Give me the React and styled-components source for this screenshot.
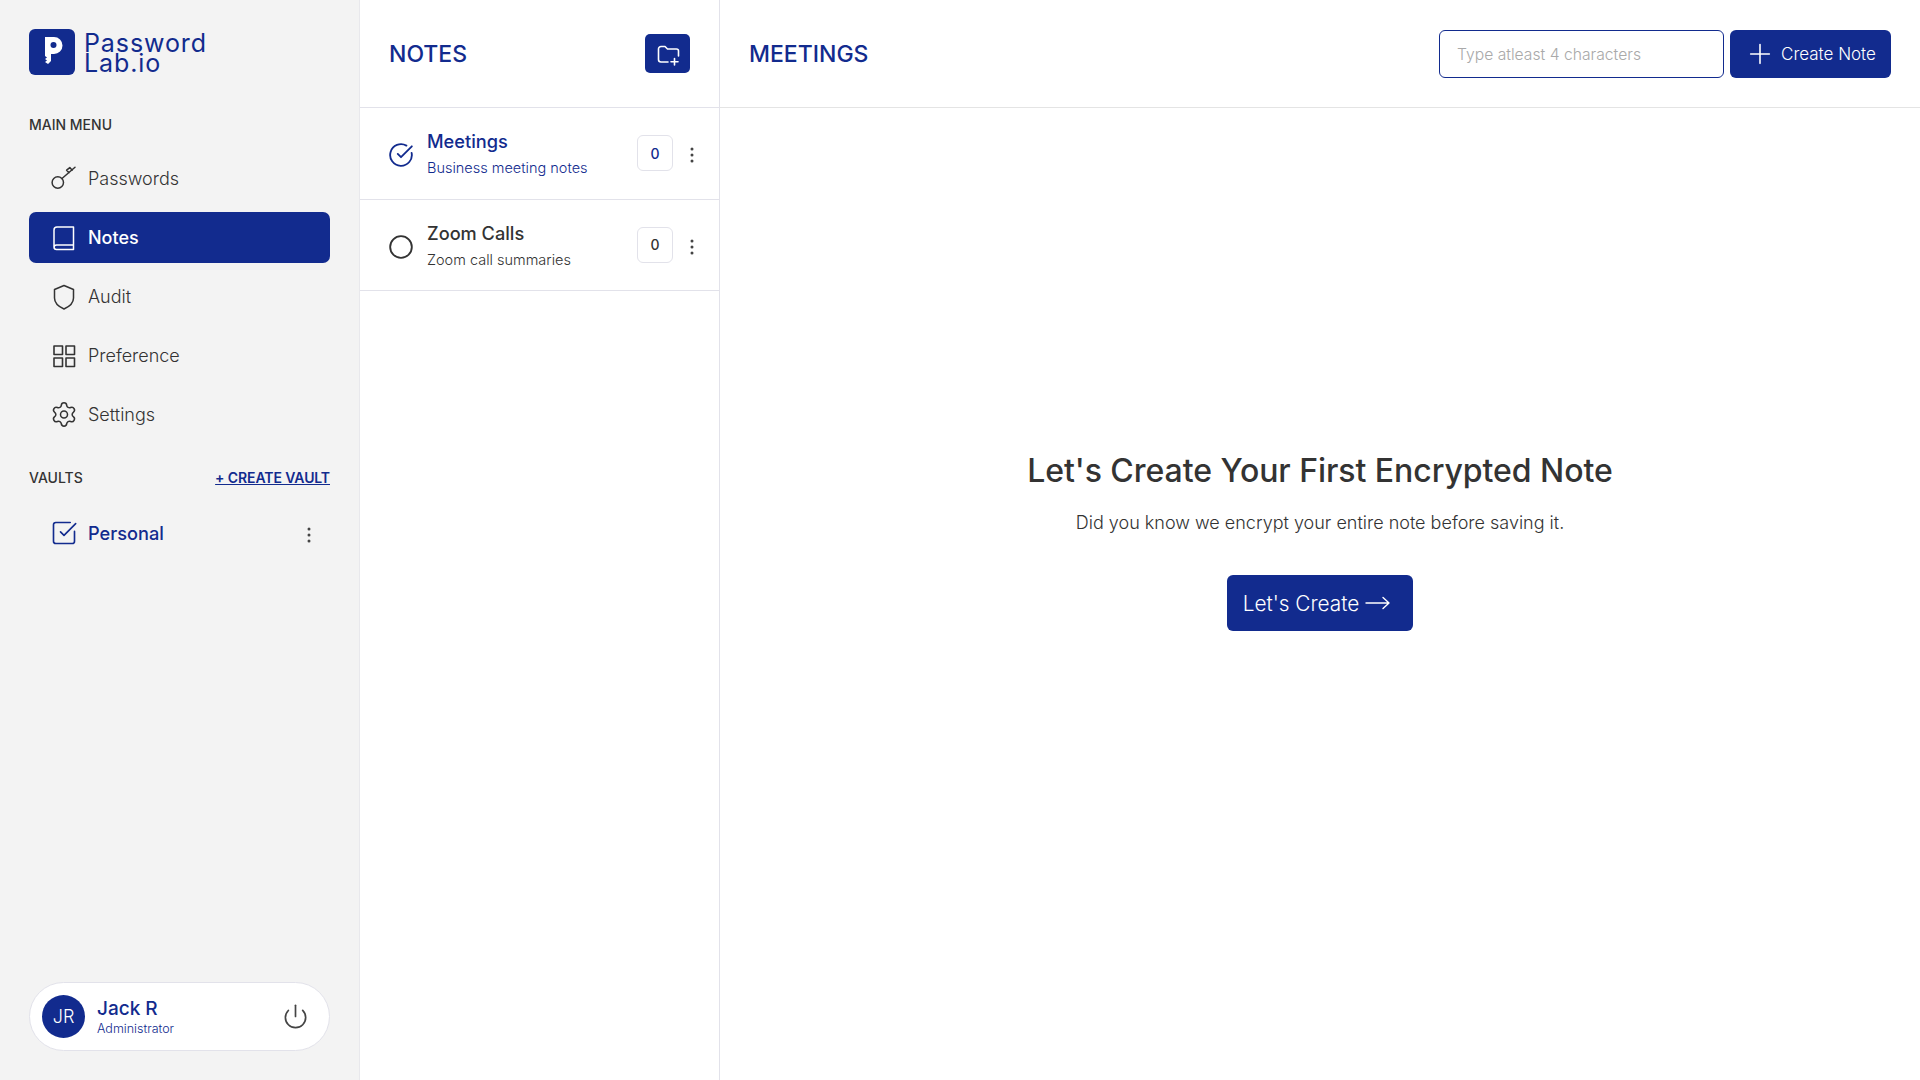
import React from "react";
import styled, { createGlobalStyle } from "styled-components";
import { Settings, SquareCheckBig, CircleCheckBig, Circle, Power, Plus } from "lucide-react";

const brand = "#122b8e";
const ink = "#333333";
const line = "#e2e2ea";

const Global = createGlobalStyle`
  html, body { margin: 0; padding: 0; background: #fff; }
  body { font-family: Inter, "Liberation Sans", sans-serif; color: ${ink}; }
  * { box-sizing: border-box; }
`;

const Page = styled.div`
  display: grid;
  grid-template-columns: 360px 360px 1fr;
  height: 1080px;
  overflow: hidden;
`;

const Sidebar = styled.aside`
  background: #f3f3f3;
  border-right: 1px solid #e8e8ec;
  padding: 29px 29px 29px;
  display: flex;
  flex-direction: column;
`;

const LogoRow = styled.div`
  display: flex;
  align-items: center;
  gap: 9px;
  height: 45px;
  margin-bottom: 42px;
`;

const LogoText = styled.div`
  font-size: 25px;
  line-height: 20px;
  color: ${brand};
  letter-spacing: 0.9px;
  padding-top: 2px;
`;

const SectionLabel = styled.div`
  font-size: 14px;
  line-height: 18px;
  font-weight: 500;
  color: ${ink};
`;

const Menu = styled.nav`
  display: flex;
  flex-direction: column;
  gap: 8px;
  margin-top: 19px;
`;

const MenuItem = styled.a`
  display: flex;
  align-items: center;
  gap: 10px;
  height: 51px;
  padding-left: 21px;
  border-radius: 7px;
  font-size: 18px;
  font-weight: ${(p) => (p.$active ? 500 : 300)};
  background: ${(p) => (p.$active ? brand : "transparent")};
  color: ${(p) => (p.$active ? "#fff" : ink)};
`;

const IconSlot = styled.span`
  width: 28px;
  height: 28px;
  flex: none;
  display: flex;
  align-items: center;
  justify-content: center;
`;

const VaultHead = styled.div`
  display: flex;
  align-items: center;
  justify-content: space-between;
  margin-top: 29px;
`;

const CreateVault = styled.a`
  font-size: 14px;
  line-height: 18px;
  font-weight: 600;
  letter-spacing: -0.1px;
  color: ${brand};
  text-decoration: underline;
`;

const VaultRow = styled.div`
  display: flex;
  align-items: center;
  gap: 10px;
  height: 51px;
  margin-top: 20px;
  padding: 0 18px 0 21px;
  font-size: 18.2px;
  font-weight: 500;
  color: ${brand};
`;

const Grow = styled.span`
  flex: 1;
`;

const UserCard = styled.div`
  margin-top: auto;
  height: 69px;
  border-radius: 35px;
  background: #fff;
  border: 1px solid ${line};
  display: flex;
  align-items: center;
  padding: 0 20px 0 12px;
`;

const Avatar = styled.div`
  width: 43px;
  height: 43px;
  border-radius: 50%;
  background: ${brand};
  color: #fff;
  font-size: 18px;
  font-weight: 300;
  display: flex;
  align-items: center;
  justify-content: center;
  margin-right: 12px;
`;

const UserText = styled.div`
  flex: 1;
  display: flex;
  flex-direction: column;
`;

const UserName = styled.div`
  font-size: 19px;
  line-height: 24px;
  font-weight: 500;
  color: ${brand};
`;

const UserRole = styled.div`
  font-size: 12.5px;
  line-height: 16px;
  font-weight: 300;
  color: ${brand};
`;

const ListPanel = styled.section`
  border-right: 1px solid ${line};
  display: flex;
  flex-direction: column;
`;

const ListHead = styled.header`
  height: 108px;
  border-bottom: 1px solid ${line};
  display: flex;
  align-items: center;
  justify-content: space-between;
  padding: 0 29px;
`;

const PanelTitle = styled.h2`
  margin: 0;
  font-size: 23px;
  font-weight: 500;
  color: ${brand};
`;

const IconButton = styled.button`
  width: 45px;
  height: 39px;
  border: 0;
  border-radius: 5px;
  background: ${brand};
  color: #fff;
  display: flex;
  align-items: center;
  justify-content: center;
  padding: 0;
`;

const NoteRow = styled.div`
  height: 91.5px;
  border-bottom: 1px solid ${line};
  display: flex;
  align-items: center;
  padding: 0 24px 0 28px;
  color: ${(p) => (p.$active ? brand : ink)};
`;

const NoteMark = styled.span`
  display: flex;
  margin-top: 4px;
`;

const NoteText = styled.div`
  flex: 1;
  margin-left: 13px;
  padding-top: 1px;
  display: flex;
  flex-direction: column;
  gap: 5px;
`;

const NoteTitle = styled.div`
  font-size: 18.2px;
  line-height: 24px;
  font-weight: 500;
`;

const NoteSub = styled.div`
  font-size: 14.5px;
  line-height: 20px;
  font-weight: 300;
`;

const CountBox = styled.div`
  width: 36px;
  height: 36px;
  border: 1px solid ${line};
  border-radius: 6px;
  background: #fff;
  display: flex;
  align-items: center;
  justify-content: center;
  font-size: 14px;
  font-weight: 500;
  margin-right: 16px;
`;

const RowDots = styled.span`
  display: flex;
  margin-top: 4px;
`;

const Main = styled.main`
  display: flex;
  flex-direction: column;
`;

const MainHead = styled.header`
  height: 108px;
  border-bottom: 1px solid #e4e4e4;
  display: flex;
  align-items: center;
  padding: 0 29px;
  gap: 6px;
`;

const Search = styled.input`
  width: 285px;
  height: 48px;
  border: 1.5px solid ${brand};
  border-radius: 6px;
  padding: 2px 17px 0;
  font: 300 15.7px Inter, sans-serif;
  &::placeholder { color: #a9a9a9; opacity: 1; }
`;

const PrimaryButton = styled.button`
  display: flex;
  align-items: center;
  border: 0;
  background: ${brand};
  color: #fff;
  font-family: Inter, sans-serif;
  font-weight: 300;
  border-radius: 6px;
`;

const CreateNote = styled(PrimaryButton)`
  width: 161px;
  height: 48px;
  padding: 1px 0 0 14px;
  gap: 5px;
  font-size: 17px;
`;

const Empty = styled.div`
  flex: 1;
  display: flex;
  flex-direction: column;
  align-items: center;
  justify-content: center;
  padding-bottom: 108px;
`;

const EmptyTitle = styled.h1`
  margin: 0;
  font-size: 32px;
  line-height: 44px;
  font-weight: 500;
  letter-spacing: -0.05px;
  color: ${ink};
`;

const EmptyText = styled.p`
  margin: 17px 0 0;
  font-size: 18px;
  line-height: 26px;
  font-weight: 300;
`;

const LetsCreate = styled(PrimaryButton)`
  margin-top: 39px;
  width: 186px;
  height: 56px;
  justify-content: center;
  gap: 6px;
  padding: 0 7px 0 0;
  font-size: 20.8px;
`;

const Outline = ({ children, strokeWidth = 1.5 }) => (
  <svg width="28" height="28" viewBox="0 0 28 28" fill="none" stroke="currentColor" strokeWidth={strokeWidth} strokeLinecap="round" strokeLinejoin="round">
    {children}
  </svg>
);

const KeyIcon = () => (
  <Outline>
    <circle cx="7.8" cy="17.5" r="5.7" />
    <path d="M12 13.5 L25 2.2 M19 7.8 L16.6 5.2 L19.8 2.6 L22.2 5.2" />
  </Outline>
);

const BookIcon = () => (
  <Outline>
    <path d="M23.5 3 H7 a3 3 0 0 0 -3 3 V23 a2.5 2.5 0 0 0 2.5 2.5 H23.5 Z M4 23.5 a2.5 2.5 0 0 1 2.5 -2.5 H23.5" />
  </Outline>
);

const ShieldIcon = () => (
  <Outline>
    <path d="M14 2.5 L23.5 6.5 V15 C23.5 20.5 18.5 24 14 26 C9.5 24 4.5 20.5 4.5 15 V6.5 Z" />
  </Outline>
);

const GridIcon = () => (
  <Outline strokeWidth={1.6}>
    <rect x="4" y="4" width="8.5" height="8.5" />
    <rect x="16" y="4" width="8.5" height="8.5" />
    <rect x="4" y="16" width="8.5" height="8.5" />
    <rect x="16" y="16" width="8.5" height="8.5" />
  </Outline>
);

const FolderIcon = () => (
  <svg width="24" height="24" viewBox="0 0 24 24" fill="none" stroke="currentColor" strokeWidth="1.6" strokeLinecap="round" strokeLinejoin="round">
    <path d="M12 20 H5 a2.5 2.5 0 0 1 -2.5 -2.5 V7 a2.5 2.5 0 0 1 2.5 -2.5 h4 l2.5 2.5 h9 a2 2 0 0 1 2 2 v5" />
    <path d="M18.5 16.5 v6.5 M15 19.8 h7" />
  </svg>
);

const LogoMark = () => (
  <svg width="46" height="46" viewBox="0 0 46 46">
    <rect width="46" height="46" rx="6" fill={brand} />
    <path d="M16 8 H25 a8.5 8.5 0 0 1 0 17 H22 V32 L19 35 L16 33 L18 31.5 L16 30 L18 28.5 L16 27 Z" fill="#fff" />
    <circle cx="24.5" cy="16" r="3" fill={brand} />
  </svg>
);

const Dots = ({ color = "#444" }) => (
  <svg width="6" height="16" viewBox="0 0 6 16" fill={color}>
    <circle cx="3" cy="2" r="1.5" />
    <circle cx="3" cy="8" r="1.5" />
    <circle cx="3" cy="14" r="1.5" />
  </svg>
);

const ArrowIcon = () => (
  <svg width="25" height="14" viewBox="0 0 25 14" fill="none" stroke="currentColor" strokeWidth="1.4" strokeLinecap="round" strokeLinejoin="round">
    <path d="M1 7 H24 M18 1.5 L24 7 L18 12.5" />
  </svg>
);

const menu = [
  { label: "Passwords", icon: <KeyIcon /> },
  { label: "Notes", icon: <BookIcon />, active: true },
  { label: "Audit", icon: <ShieldIcon /> },
  { label: "Preference", icon: <GridIcon /> },
  { label: "Settings", icon: <Settings size={31} strokeWidth={1.3} /> },
];

const notes = [
  { title: "Meetings", sub: "Business meeting notes", active: true },
  { title: "Zoom Calls", sub: "Zoom call summaries" },
];

export default function App() {
  return (
    <Page>
      <Global />
      <Sidebar>
        <LogoRow>
          <LogoMark />
          <LogoText>Password<br />Lab.io</LogoText>
        </LogoRow>
        <SectionLabel>MAIN MENU</SectionLabel>
        <Menu>
          {menu.map((m) => (
            <MenuItem key={m.label} $active={m.active}>
              <IconSlot>{m.icon}</IconSlot>
              {m.label}
            </MenuItem>
          ))}
        </Menu>
        <VaultHead>
          <SectionLabel>VAULTS</SectionLabel>
          <CreateVault>+ CREATE VAULT</CreateVault>
        </VaultHead>
        <VaultRow>
          <IconSlot><SquareCheckBig size={28} strokeWidth={1.4} /></IconSlot>
          <Grow>Personal</Grow>
          <RowDots><Dots /></RowDots>
        </VaultRow>
        <UserCard>
          <Avatar>JR</Avatar>
          <UserText>
            <UserName>Jack R</UserName>
            <UserRole>Administrator</UserRole>
          </UserText>
          <Power size={27} strokeWidth={1.5} color="#444" />
        </UserCard>
      </Sidebar>
      <ListPanel>
        <ListHead>
          <PanelTitle>NOTES</PanelTitle>
          <IconButton><FolderIcon /></IconButton>
        </ListHead>
        {notes.map((n) => (
          <NoteRow key={n.title} $active={n.active}>
            <NoteMark>
              {n.active ? <CircleCheckBig size={26} strokeWidth={1.7} /> : <Circle size={26} strokeWidth={1.7} />}
            </NoteMark>
            <NoteText>
              <NoteTitle>{n.title}</NoteTitle>
              <NoteSub>{n.sub}</NoteSub>
            </NoteText>
            <CountBox>0</CountBox>
            <RowDots><Dots /></RowDots>
          </NoteRow>
        ))}
      </ListPanel>
      <Main>
        <MainHead>
          <PanelTitle>MEETINGS</PanelTitle>
          <Grow />
          <Search placeholder="Type atleast 4 characters" />
          <CreateNote><Plus size={32} strokeWidth={1.2} />Create Note</CreateNote>
        </MainHead>
        <Empty>
          <EmptyTitle>Let's Create Your First Encrypted Note</EmptyTitle>
          <EmptyText>Did you know we encrypt your entire note before saving it.</EmptyText>
          <LetsCreate>Let's Create <ArrowIcon /></LetsCreate>
        </Empty>
      </Main>
    </Page>
  );
}
